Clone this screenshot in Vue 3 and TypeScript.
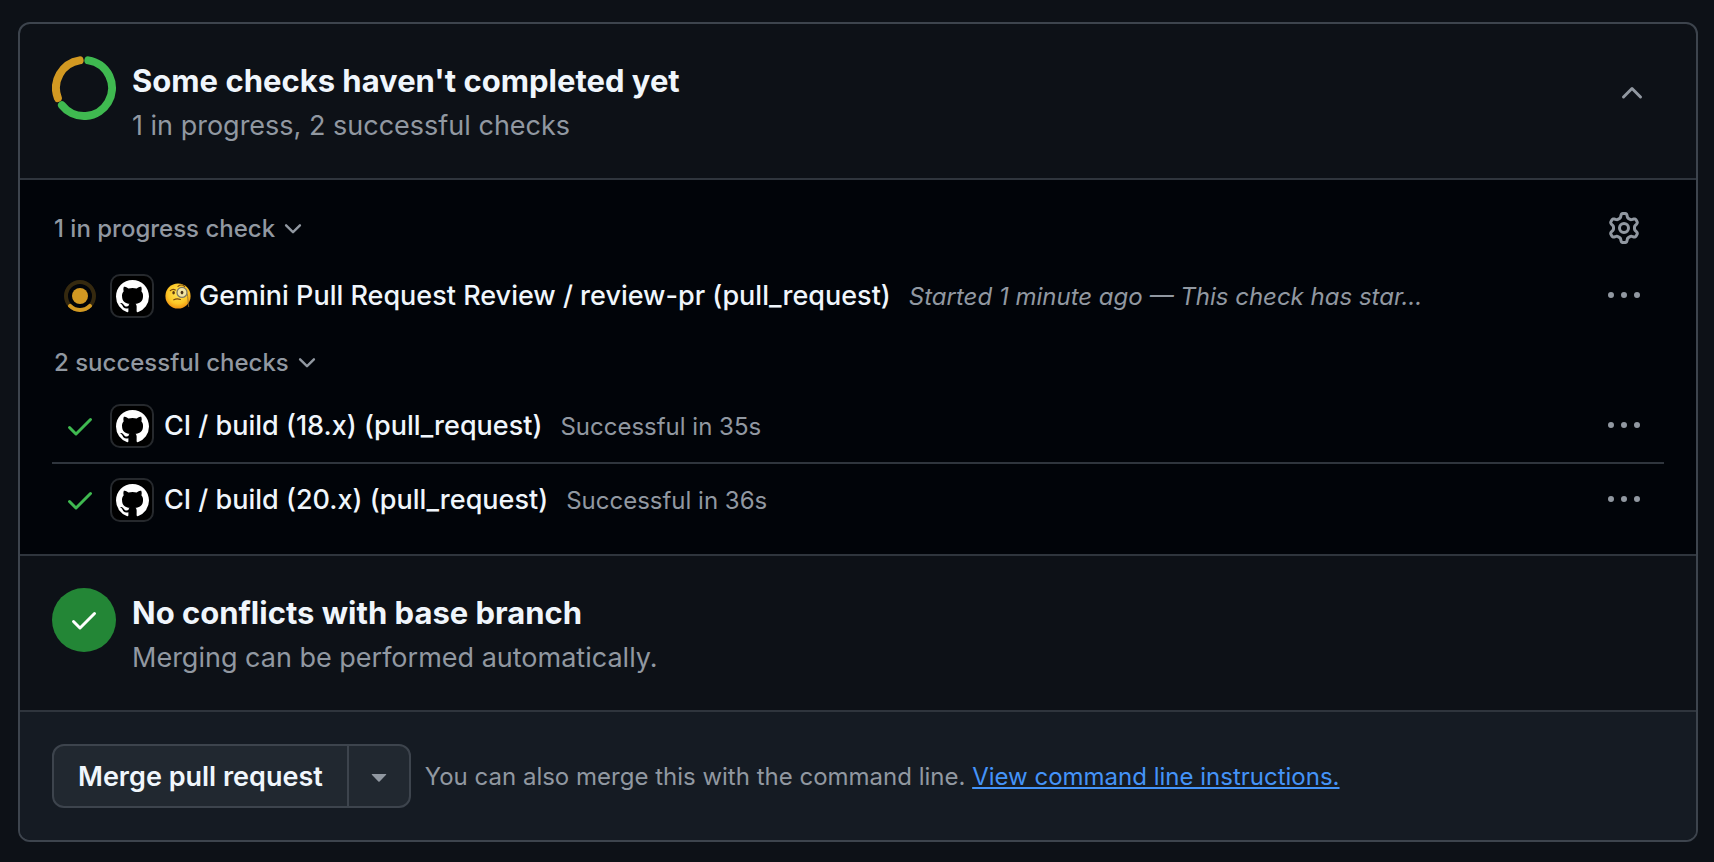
<script setup lang="ts">
import { ref } from 'vue'

interface Check {
  name: string
  note: string
  state: 'pending' | 'success'
  emoji?: boolean
}

interface Group {
  title: string
  open: boolean
  checks: Check[]
}

const expanded = ref(true)

const groups = ref<Group[]>([
  {
    title: '1 in progress check',
    open: true,
    checks: [
      {
        name: 'Gemini Pull Request Review / review-pr (pull_request)',
        note: 'Started 1 minute ago — This check has star…',
        state: 'pending',
        emoji: true,
      },
    ],
  },
  {
    title: '2 successful checks',
    open: true,
    checks: [
      { name: 'CI / build (18.x) (pull_request)', note: 'Successful in 35s', state: 'success' },
      { name: 'CI / build (20.x) (pull_request)', note: 'Successful in 36s', state: 'success' },
    ],
  },
])

const checkPath =
  'M13.78 4.22a.75.75 0 0 1 0 1.06l-7.25 7.25a.75.75 0 0 1-1.06 0L2.22 9.28a.751.751 0 0 1 .018-1.042.751.751 0 0 1 1.042-.018L6 10.94l6.72-6.72a.75.75 0 0 1 1.06 0Z'
const chevronDown =
  'M12.78 5.22a.749.749 0 0 1 0 1.06l-4.25 4.25a.749.749 0 0 1-1.06 0L3.22 6.28a.749.749 0 1 1 1.06-1.06L8 8.939l3.72-3.719a.749.749 0 0 1 1.06 0Z'
const chevronUp =
  'M3.22 10.53a.749.749 0 0 1 0-1.06l4.25-4.25a.749.749 0 0 1 1.06 0l4.25 4.25a.749.749 0 1 1-1.06 1.06L8 6.811 4.28 10.53a.749.749 0 0 1-1.06 0Z'
const kebab =
  'M8 9a1.5 1.5 0 1 0 0-3 1.5 1.5 0 0 0 0 3ZM1.5 9a1.5 1.5 0 1 0 0-3 1.5 1.5 0 0 0 0 3Zm13 0a1.5 1.5 0 1 0 0-3 1.5 1.5 0 0 0 0 3Z'
const triangleDown =
  'm4.427 7.427 3.396 3.396a.25.25 0 0 0 .354 0l3.396-3.396A.25.25 0 0 0 11.396 7H4.604a.25.25 0 0 0-.177.427Z'
const gear =
  'M8 0a8.2 8.2 0 0 1 .701.031C9.444.095 9.99.645 10.16 1.29l.288 1.107c.018.066.079.158.212.224.231.114.454.243.668.386.123.082.233.09.299.071l1.103-.303c.644-.176 1.392.021 1.82.63.27.385.506.792.704 1.218.315.675.111 1.422-.364 1.891l-.814.806c-.049.048-.098.147-.088.294.016.257.016.515 0 .772-.01.147.038.246.088.294l.814.806c.475.469.679 1.216.364 1.891a7.977 7.977 0 0 1-.704 1.217c-.428.61-1.176.807-1.82.63l-1.102-.302c-.067-.019-.177-.011-.3.071a5.909 5.909 0 0 1-.668.386c-.133.066-.194.158-.211.224l-.29 1.106c-.168.646-.715 1.196-1.458 1.26a8.006 8.006 0 0 1-1.402 0c-.743-.064-1.289-.614-1.458-1.26l-.289-1.106c-.018-.066-.079-.158-.212-.224a5.738 5.738 0 0 1-.668-.386c-.123-.082-.233-.09-.299-.071l-1.103.303c-.644.176-1.392-.021-1.82-.63a8.12 8.12 0 0 1-.704-1.218c-.315-.675-.111-1.422.363-1.891l.815-.806c.05-.048.098-.147.088-.294a6.214 6.214 0 0 1 0-.772c.01-.147-.038-.246-.088-.294l-.815-.806C.635 6.045.431 5.298.746 4.623a7.92 7.92 0 0 1 .704-1.217c.428-.61 1.176-.807 1.82-.63l1.102.302c.067.019.177.011.3-.071.214-.143.437-.272.668-.386.133-.066.194-.158.211-.224l.29-1.106C6.009.645 6.556.095 7.299.03 7.53.01 7.764 0 8 0Zm-.571 1.525c-.036.003-.108.036-.137.146l-.289 1.105c-.147.561-.549.967-.998 1.189-.173.086-.34.183-.5.29-.417.278-.97.423-1.529.27l-1.103-.303c-.109-.03-.175.016-.195.045-.22.312-.412.644-.573.99-.014.031-.021.11.059.19l.815.806c.411.406.562.957.53 1.456a4.709 4.709 0 0 0 0 .582c.032.499-.119 1.05-.53 1.456l-.815.806c-.081.08-.073.159-.059.19.162.346.353.677.573.989.02.03.085.076.195.046l1.102-.303c.56-.153 1.113-.008 1.53.27.161.107.328.204.501.29.447.222.85.629.997 1.189l.289 1.105c.029.109.101.143.137.146a6.6 6.6 0 0 0 1.142 0c.036-.003.108-.036.137-.146l.289-1.105c.147-.561.549-.967.998-1.189.173-.086.34-.183.5-.29.417-.278.97-.423 1.529-.27l1.103.303c.109.029.175-.016.195-.045.22-.313.411-.644.573-.99.014-.031.021-.11-.059-.19l-.815-.806c-.411-.406-.562-.957-.53-1.456a4.709 4.709 0 0 0 0-.582c-.032-.499.119-1.05.53-1.456l.815-.806c.081-.08.073-.159.059-.19a6.464 6.464 0 0 0-.573-.989c-.02-.03-.085-.076-.195-.046l-1.102.303c-.56.153-1.113.008-1.53-.27a4.44 4.44 0 0 0-.501-.29c-.447-.222-.85-.629-.997-1.189l-.289-1.105c-.029-.11-.101-.143-.137-.146a6.6 6.6 0 0 0-1.142 0ZM11 8a3 3 0 1 1-6 0 3 3 0 0 1 6 0ZM9.5 8a1.5 1.5 0 1 0-3.001.001A1.5 1.5 0 0 0 9.5 8Z'
const githubMark =
  'M8 0c4.42 0 8 3.58 8 8a8.013 8.013 0 0 1-5.45 7.59c-.4.08-.55-.17-.55-.38 0-.27.01-1.13.01-2.2 0-.75-.25-1.23-.54-1.48 1.78-.2 3.65-.88 3.65-3.95 0-.88-.31-1.59-.82-2.15.08-.2.36-1.02-.08-2.12 0 0-.67-.22-2.2.82-.64-.18-1.32-.27-2-.27-.68 0-1.36.09-2 .27-1.53-1.03-2.2-.82-2.2-.82-.44 1.1-.16 1.92-.08 2.12-.51.56-.82 1.28-.82 2.15 0 3.06 1.86 3.75 3.64 3.95-.23.2-.44.55-.51 1.07-.46.21-1.61.55-2.33-.66-.15-.24-.6-.83-1.23-.82-.67.01-.27.38.01.53.34.19.73.9.82 1.13.16.45.68 1.31 2.69.94 0 .67.01 1.3.01 1.49 0 .21-.15.45-.55.38A7.995 7.995 0 0 1 0 8c0-4.42 3.58-8 8-8Z'

// Arc of the progress ring; angles are clockwise degrees from the top.
function arc(from: number, to: number): string {
  const point = (deg: number) => {
    const a = (deg * Math.PI) / 180
    return `${(32 + 28 * Math.sin(a)).toFixed(2)} ${(32 - 28 * Math.cos(a)).toFixed(2)}`
  }
  return `M${point(from)}A28 28 0 ${to - from > 180 ? 1 : 0} 1 ${point(to)}`
}
</script>

<template>
  <main class="page">
    <div class="merge-box">
      <section class="summary">
        <svg class="badge" viewBox="0 0 64 64" fill="none" stroke-width="8" stroke-linecap="round" aria-hidden="true">
          <path :d="arc(9, 232)" stroke="#3fb950" />
          <path :d="arc(249, 351)" stroke="#d29922" />
        </svg>
        <div class="summary-text">
          <h2>Some checks haven't completed yet</h2>
          <p>1 in progress, 2 successful checks</p>
        </div>
        <button class="icon-button toggle" type="button" aria-label="Collapse checks" :aria-expanded="expanded" @click="expanded = !expanded">
          <svg class="icon" viewBox="0 0 16 16"><path :d="expanded ? chevronUp : chevronDown" /></svg>
        </button>
      </section>

      <section v-if="expanded" class="checks">
        <div v-for="(group, i) in groups" :key="group.title">
          <div class="group-head" :class="{ first: i === 0 }">
            <button class="group-button" type="button" :aria-expanded="group.open" @click="group.open = !group.open">
              {{ group.title }}
              <svg class="icon small" viewBox="0 0 16 16"><path :d="chevronDown" /></svg>
            </button>
            <button v-if="i === 0" class="icon-button" type="button" aria-label="Check settings">
              <svg class="icon" viewBox="0 0 16 16"><path :d="gear" /></svg>
            </button>
          </div>
          <ul v-if="group.open">
            <li v-for="check in group.checks" :key="check.name">
              <svg v-if="check.state === 'success'" class="icon success" viewBox="0 0 16 16"><path :d="checkPath" /></svg>
              <svg v-else class="icon" viewBox="0 0 32 32" fill="none">
                <circle cx="16" cy="16" r="14" stroke="#d29922" stroke-opacity="0.25" stroke-width="4" />
                <path d="M6.1 25.9A14 14 0 0 0 25.9 25.9" stroke="#d29922" stroke-width="4" stroke-linecap="round" />
                <circle cx="16" cy="16" r="8" fill="#d29922" />
              </svg>
              <span class="avatar">
                <svg viewBox="0 0 16 16"><path :d="githubMark" fill="#fff" /></svg>
              </span>
              <svg v-if="check.emoji" class="emoji" viewBox="0 0 26 26" role="img" aria-label="Face with monocle">
                <defs>
                  <radialGradient id="face" cx="0.5" cy="0.4" r="0.62">
                    <stop offset="0" stop-color="#ffe65a" />
                    <stop offset="0.65" stop-color="#fcc727" />
                    <stop offset="1" stop-color="#ee8d10" />
                  </radialGradient>
                </defs>
                <circle cx="13" cy="13" r="12.6" fill="url(#face)" />
                <path d="M22.1 10.500c1 4 .9 9 1.600 13.500" fill="none" stroke="#8a6a30" stroke-width="0.8" />
                <circle cx="17" cy="9.400" r="5" fill="#f3e6a4" stroke="#7f7a68" stroke-width="1.300" />
                <ellipse cx="17" cy="9.600" rx="1.400" ry="1.800" fill="#4a3217" />
                <ellipse cx="8.600" cy="9.800" rx="1.300" ry="1.700" fill="#5b360c" />
                <path d="M5.300 7.600c1.500-1.400 3.500-1.600 5-.6M13 3.400c2-1.700 5-1.600 6.700.2" fill="none" stroke="#7a480b" stroke-width="1.200" stroke-linecap="round" />
                <path d="M8.800 16.800c2-1.200 4.500-1.200 6.600-.3" fill="none" stroke="#7a480b" stroke-width="1.200" stroke-linecap="round" />
              </svg>
              <a class="check-name" href="#">{{ check.name }}</a>
              <span class="note" :class="check.state">{{ check.note }}</span>
              <button class="icon-button" type="button" :aria-label="`More actions for ${check.name}`">
                <svg class="icon" viewBox="0 0 16 16"><path :d="kebab" /></svg>
              </button>
            </li>
          </ul>
        </div>
      </section>

      <section class="summary">
        <span class="badge ok">
          <svg class="icon" viewBox="0 0 16 16"><path :d="checkPath" /></svg>
        </span>
        <div class="summary-text">
          <h2>No conflicts with base branch</h2>
          <p>Merging can be performed automatically.</p>
        </div>
      </section>

      <footer>
        <div class="button-group">
          <button class="merge" type="button">Merge pull request</button>
          <button class="options" type="button" aria-label="Select merge method">
            <svg class="icon" viewBox="0 0 16 16"><path :d="triangleDown" /></svg>
          </button>
        </div>
        <p>You can also merge this with the command line. <a href="#">View command line instructions.</a></p>
      </footer>
    </div>
  </main>
</template>

<style>
body {
  background: #0d1117;
}
</style>

<style scoped>
.page {
  box-sizing: border-box;
  min-height: 100vh;
  padding: 22px 16px 20px 18px;
  background: #0d1117;
  color: #f0f6fc;
  font-family: Inter, "Liberation Sans", sans-serif;
  font-size: 24px;
  line-height: 36px;
}
.merge-box {
  border: 2px solid #3d444d;
  border-radius: 12px;
  overflow: hidden;
}
h2,
p,
ul {
  margin: 0;
  padding: 0;
}
button {
  font: inherit;
  color: inherit;
  background: none;
  border: 0;
  padding: 0;
  cursor: pointer;
}
.icon {
  display: block;
  flex: none;
  width: 32px;
  height: 32px;
}
.icon path:not([stroke]) {
  fill: currentColor;
}
.icon.small {
  width: 26px;
  height: 26px;
}
.summary {
  display: flex;
  align-items: flex-start;
  gap: 16px;
  padding: 32px;
}
.summary-text {
  flex: 1;
}
.badge {
  flex: none;
  width: 64px;
  height: 64px;
}
.badge.ok {
  display: flex;
  align-items: center;
  justify-content: center;
  border-radius: 50%;
  background: #238636;
  color: #fff;
}
h2 {
  font-size: 31px;
  line-height: 50px;
  font-weight: 650;
}
.summary p {
  font-size: 27px;
  line-height: 40px;
  font-weight: 430;
  color: #9198a1;
}
.icon-button {
  display: flex;
  align-items: center;
  justify-content: center;
  flex: none;
  width: 56px;
  height: 56px;
  color: #9198a1;
}
.toggle {
  margin: 9px 4px 0 0;
}
.checks {
  padding: 16px 32px 18px;
  background: #010409;
  border-top: 2px solid #2f353d;
  border-bottom: 2px solid #2f353d;
}
.group-head {
  box-sizing: border-box;
  display: flex;
  align-items: center;
  justify-content: space-between;
  height: 58px;
  padding: 2px 12px 0 2px;
}
.group-head.first {
  height: 64px;
  padding-top: 0;
}
.group-button {
  display: flex;
  align-items: center;
  gap: 5px;
  padding-top: 2px;
  font-weight: 500;
  color: #9198a1;
}
ul {
  list-style: none;
}
li {
  display: flex;
  align-items: center;
  height: 72px;
  padding: 0 12px;
}
li + li {
  border-top: 2px solid #2f353d;
}
.success.icon {
  color: #3fb950;
}
.avatar {
  box-sizing: border-box;
  display: flex;
  align-items: center;
  justify-content: center;
  flex: none;
  width: 44px;
  height: 44px;
  margin: 0 10px 0 14px;
  border: 2px solid #26292d;
  border-radius: 10px;
  background: #000;
}
.avatar svg {
  width: 33px;
  height: 33px;
}
.emoji {
  flex: none;
  width: 26px;
  height: 26px;
  margin: 0 8px 0 1px;
}
.check-name {
  color: inherit;
  font-size: 27px;
  font-weight: 480;
  text-decoration: none;
  white-space: nowrap;
}
.note {
  margin: 0 auto 0 18px;
  padding-top: 2px;
  color: #9198a1;
  white-space: nowrap;
}
.note.pending {
  font-style: italic;
}
footer {
  display: flex;
  align-items: center;
  gap: 14px;
  padding: 32px;
  border-top: 2px solid #2f353d;
  background: #151b23;
  color: #9198a1;
}
footer p {
  padding-top: 2px;
}
.button-group {
  display: flex;
  box-sizing: border-box;
  height: 64px;
  border: 2px solid #3d444d;
  border-radius: 12px;
  background: #212830;
  overflow: hidden;
}
.merge {
  padding: 2px 24px 0;
  color: #f0f6fc;
  font-size: 27px;
  font-weight: 640;
}
.options {
  width: 62px;
  border-left: 2px solid #3d444d;
}
.options .icon {
  margin: 0 auto;
  color: #9198a1;
}
footer a {
  color: #4493f8;
  text-decoration: underline;
}
</style>
